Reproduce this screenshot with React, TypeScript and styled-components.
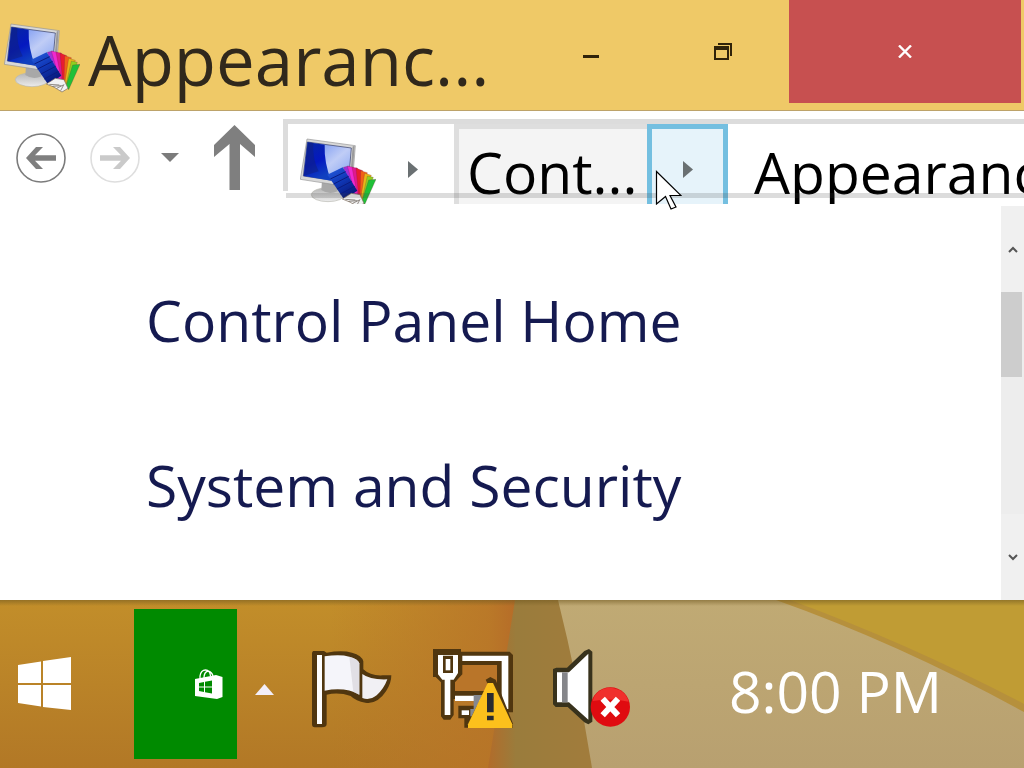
import React from "react";
import styled, { createGlobalStyle } from "styled-components";

const Global = createGlobalStyle`
  * { box-sizing: border-box; }
  body { margin: 0; font-family: "Open Sans", "Noto Sans", sans-serif; background: #fff; }
  button { border: 0; padding: 0; margin: 0; background: transparent; font: inherit; color: inherit; }
  svg { display: block; }
`;

const Desktop = styled.div`
  position: relative;
  display: flex;
  flex-direction: column;
  min-height: 100vh;
  overflow: hidden;
`;

const TitleBar = styled.header`
  display: flex;
  height: 111px;
  padding: 0 3px 0 4px;
  background: #efc967;
  border-bottom: 1px solid #bda36a;
`;

const TitleIcon = styled.div`
  padding-top: 23px;
  flex: none;
`;

const Title = styled.h1`
  flex: 1;
  min-width: 0;
  margin: 0;
  padding-left: 8px;
  overflow: hidden;
  white-space: nowrap;
  font-size: 69px;
  font-weight: 400;
  line-height: 118px;
  height: 110px;
  color: #30281c;
`;

const CaptionButton = styled.button<{ $close?: boolean }>`
  flex: none;
  display: grid;
  place-items: center;
  width: ${(p) => (p.$close ? 232 : 132)}px;
  height: 103px;
  background: ${(p) => (p.$close ? "#c75050" : "transparent")};
`;

const NavBar = styled.div`
  display: flex;
  align-items: center;
  height: 93px;
  padding-left: 16px;
`;

const NavButton = styled.button<{ $width: number; $after?: number }>`
  flex: none;
  display: grid;
  place-items: center;
  width: ${(p) => p.$width}px;
  height: 70px;
  margin-right: ${(p) => p.$after ?? 0}px;
`;

const AddressBar = styled.nav`
  position: relative;
  flex: 1;
  min-width: 0;
  display: flex;
  align-self: stretch;
  margin-top: 8px;
  padding-left: 5px;
  overflow: hidden;
  border-top: 5px solid #dcdcdc;
  background: linear-gradient(#dcdcdc, #dcdcdc) 0 0 / 5px 67px no-repeat;

  &::after {
    content: "";
    position: absolute;
    left: 3px;
    right: 0;
    top: 69px;
    height: 5px;
    background: rgba(60, 60, 60, 0.18);
    pointer-events: none;
  }
`;

const RootCrumb = styled.button`
  flex: none;
  display: flex;
  align-items: flex-start;
  gap: 32px;
  width: 166px;
  padding: 14px 0 0 12px;
`;

const CrumbArrow = styled.span`
  display: block;
  padding-top: 23px;
`;

const Crumb = styled.button<{ $plain?: boolean }>`
  flex: none;
  display: flex;
  align-items: flex-start;
  width: ${(p) => (p.$plain ? "auto" : "193px")};
  padding: ${(p) => (p.$plain ? "18px 0 0 26px" : "13px 0 0 8px")};
  text-align: left;
  white-space: nowrap;
  font-size: 57px;
  line-height: 60px;
  color: #000;
  border: solid #dedede;
  border-width: ${(p) => (p.$plain ? "0" : "5px 0 0 5px")};
  background: ${(p) => (p.$plain ? "transparent" : "#f4f4f4")};
`;

const HotArrow = styled.button`
  flex: none;
  display: flex;
  justify-content: center;
  align-items: flex-start;
  width: 81px;
  padding-top: 32px;
  border: 5px solid #74bfe0;
  border-bottom: 0;
  background: #e6f3fa;
`;

const Body = styled.main`
  flex: 1;
  display: flex;
  padding-top: 2px;
`;

const Links = styled.ul`
  flex: 1;
  display: flex;
  flex-direction: column;
  gap: 85px;
  margin: 0;
  padding: 74px 0 0 146px;
  list-style: none;
`;

const LinkItem = styled.li`
  font-size: 57px;
  line-height: 80px;
  a { color: #151a50; text-decoration: none; white-space: nowrap; }
`;

const ScrollBar = styled.div`
  display: flex;
  flex-direction: column;
  width: 23px;
  background: #f0f0f0;
`;

const ScrollButton = styled.button`
  display: grid;
  place-items: center;
  height: 86px;
`;

const ScrollTrack = styled.div`
  flex: 1;
  background: #ededed;
`;

const ScrollThumb = styled.div`
  width: 21px;
  height: 85px;
  background: #cdcdcd;
`;

const TaskBar = styled.footer`
  position: relative;
  display: flex;
  align-items: center;
  height: 168px;
  overflow: hidden;
  background: #bb852a;
`;

const Wallpaper = styled.svg`
  position: absolute;
  inset: 0;
  width: 100%;
  height: 100%;
`;

const TaskButton = styled.button<{ $width: number }>`
  position: relative;
  flex: none;
  display: grid;
  place-items: center;
  width: ${(p) => p.$width}px;
  height: 150px;
`;

const StoreTile = styled(TaskButton)`
  justify-items: end;
  padding-right: 14px;
  background: #008a00;
`;

const StartButton = styled(TaskButton)`
  justify-items: start;
  padding-left: 18px;
`;

const Tray = styled.div`
  position: relative;
  flex: 1;
  display: flex;
  align-items: center;
  padding-top: 10px;
`;

const TrayButton = styled(TaskButton)`
  height: 90px;
`;

const Clock = styled.time`
  margin-left: auto;
  padding: 4px 82px 0 0;
  font-size: 57px;
  line-height: 80px;
  white-space: nowrap;
  color: #fff;
`;

const Pointer = styled.svg`
  position: absolute;
  left: 655px;
  top: 170px;
`;

const cards = [
  ["130,88 146,84 176,165 160,172", "#a030d8"],
  ["142,84 160,88 180,168 166,168", "#f028d0"],
  ["156,88 172,90 184,170 172,170", "#e01890"],
  ["168,90 188,98 186,176 176,174", "#e81c30"],
  ["182,98 202,104 189,180 180,176", "#f06018"],
  ["194,106 214,112 190,188 182,182", "#e8b818"],
  ["202,114 220,118 193,192 186,186", "#90d020"],
  ["206,126 228,124 194,200 186,188", "#20c038"],
];

const DisplayIcon = ({ id }: { id: string }) => (
  <svg width="76" height="70" viewBox="0 0 228 210" aria-hidden="true">
    <defs>
      <linearGradient id={`${id}s`} x1="0" y1="0" x2="1" y2="1">
        <stop offset="0" stopColor="#5a80f0" />
        <stop offset="0.55" stopColor="#c0cdf6" />
        <stop offset="1" stopColor="#7c9cf0" />
      </linearGradient>
      <linearGradient id={`${id}d`} x1="0" y1="0" x2="0.4" y2="1">
        <stop offset="0" stopColor="#0828a0" />
        <stop offset="0.6" stopColor="#0418c0" />
        <stop offset="1" stopColor="#1040c0" />
      </linearGradient>
      <linearGradient id={`${id}b`} x1="0" y1="0" x2="0" y2="1">
        <stop offset="0" stopColor="#b4b4b4" />
        <stop offset="1" stopColor="#ececec" />
      </linearGradient>
      <linearGradient id={`${id}f`} x1="0" y1="0" x2="0.6" y2="1">
        <stop offset="0" stopColor="#2860e0" />
        <stop offset="0.5" stopColor="#1038b8" />
        <stop offset="1" stopColor="#081878" />
      </linearGradient>
    </defs>
    <ellipse cx="84" cy="170" rx="50" ry="21" fill={`url(#${id}b)`} stroke="#b8b8b0" strokeWidth="2" />
    <path d="M66 128 L110 136 L112 160 Q88 172 64 156 Z" fill="#a8a8a8" />
    <path d="M21 3 L166 23 L156 148 L1 124 Z" fill="#d8d8d8" stroke="#969696" strokeWidth="2" />
    <path d="M164 24 L158 25 L148 146 L155 148 Z" fill="#9a9a9a" />
    <path d="M22 12 L154 30 L145 134 L10 114 Z" fill={`url(#${id}s)`} stroke="#303860" strokeWidth="2" />
    <path d="M23 13 L74 20 Q72 76 94 128 L11 114 Z" fill={`url(#${id}d)`} />
    <path d="M23 13 L40 15 Q36 60 56 100 L11 114 Z" fill="#102080" opacity="0.55" />
    {cards.map(([points, fill]) => (
      <polygon key={points} points={points} fill={fill} stroke="#702030" strokeOpacity="0.45" strokeWidth="1.5" />
    ))}
    <path d="M82 110 L128 88 L172 158 L132 184 Z" fill={`url(#${id}f)`} />
    <path d="M91 123 L137 101 M101 138 L146 115 M111 153 L155 130 M121 168 L164 145" stroke="#0a1c80" strokeWidth="3" />
    <path d="M127 183 L154 166 L180 170 L192 196 L174 207 Q150 190 127 183 Z" fill="#f2f2f2" stroke="#786858" strokeWidth="2" />
    <path d="M136 184 L166 186 M146 190 L172 188 M158 196 L178 186 M170 203 L180 184" stroke="#605850" strokeWidth="2" />
  </svg>
);

const RightTriangle = () => (
  <svg width="10" height="17" viewBox="0 0 10 17" aria-hidden="true">
    <path d="M0 0 L10 8.5 L0 17 Z" fill="#6a7072" />
  </svg>
);

const FlagIcon = () => (
  <svg width="80" height="78" viewBox="0 0 240 234" aria-hidden="true">
    <path d="M3 3 H36 L44 8 Q90 0 120 8 Q150 16 154 34 V58 Q175 78 212 76 L238 76 Q238 100 222 124 Q196 164 160 158 Q132 154 116 138 Q80 126 44 134 V222 Q44 232 30 232 H8 Q0 232 0 222 V8 Z" fill="#50360f" />
    <path d="M15 15 H30 V222 H15 Z" fill="#fff" />
    <path d="M38 19 Q84 12 112 20 Q138 26 142 40 V134 Q100 110 38 122 Z" fill="#f5f5fa" />
    <path d="M151 72 Q174 90 226 88 Q216 116 194 136 Q174 152 151 144 Z" fill="#f1f0f4" />
    <path d="M112 20 Q138 26 142 40 V134 L124 126 Z" fill="#d9d6dc" opacity="0.7" />
  </svg>
);

const NetworkIcon = () => (
  <svg width="80" height="80" viewBox="0 0 240 240" aria-hidden="true">
    <path d="M0 0 H84 V8 H230 L240 18 V190 H190 V150 H62 V198 L52 212 H32 L24 202 V100 L8 84 H0 Z" fill="#50360f" />
    <path d="M88 48 H192 V126 H66 V100 L88 76 Z" fill="#b97529" />
    <path d="M15 18 H75 V72 L62 92 H52 V198 H35 V92 H28 L15 76 Z M30 20 V72 H60 V20 Z" fillRule="evenodd" fill="#fff" />
    <path d="M38 30 H52 V64 H38 Z" fill="#fff" />
    <path d="M88 20 H226 V180 H206 V36 H88 Z M66 140 H142 V156 H66 Z" fill="#fff" />
    <path d="M76 170 H144 V236 H94 V208 H76 Z" fill="#50360f" />
    <path d="M86 184 H108 V198 H86 Z" fill="#fff" />
    <path d="M122 138 H148 L116 202 H112 V180 H122 Z" fill="#858890" />
    <path d="M158 92 L172 84 L188 92 L240 224 V237 H226 Z" fill="#50360f" />
    <path d="M164 102 H180 L238 226 V237 H105 V226 Z" fill="#fcc01c" />
    <path d="M162 132 H182 V190 H162 Z M162 200 H182 V214 H162 Z" fill="#292a30" />
  </svg>
);

const SpeakerIcon = () => (
  <svg width="78" height="80" viewBox="0 0 234 240" aria-hidden="true">
    <path d="M0 60 L10 56 H42 L94 6 L108 0 L118 8 V218 L106 226 L94 220 L44 174 H8 L0 166 Z" fill="#38321c" />
    <path d="M12 70 H48 L106 14 V212 L48 160 H12 Z" fill="#fff" />
    <path d="M27 70 H44 V160 H27 Z" fill="#85868a" />
    <circle cx="172" cy="174" r="59" fill="#e00b10" />
    <path d="M119 156 Q129 118 172 116 Q217 120 227 158 Q173 146 119 156 Z" fill="#f0302c" />
    <path d="M149 149 L195 199 M195 149 L149 199" stroke="#fff" strokeWidth="18" />
  </svg>
);

export default function App() {
  return (
    <Desktop>
      <Global />
      <TitleBar>
        <TitleIcon><DisplayIcon id="title" /></TitleIcon>
        <Title>Appearanc...</Title>
        <CaptionButton aria-label="Minimize">
          <svg width="16" height="13" viewBox="0 0 16 13"><path d="M0 10 H16 V13 H0 Z" fill="#30230a" /></svg>
        </CaptionButton>
        <CaptionButton aria-label="Restore">
          <svg width="18" height="18" viewBox="0 0 18 18">
            <path d="M4 1 H17 V13 M1 5 H14 V16 H1 Z" fill="none" stroke="#30230a" strokeWidth="2" />
            <path d="M0 3 H15 V7 H0 Z" fill="#30230a" />
          </svg>
        </CaptionButton>
        <CaptionButton $close aria-label="Close">
          <svg width="15" height="13" viewBox="0 0 15 13"><path d="M1 0.5 L13 12.5 M13 0.5 L1 12.5" stroke="#fff" strokeWidth="2.4" /></svg>
        </CaptionButton>
      </TitleBar>

      <NavBar>
        <NavButton $width={50} $after={24} aria-label="Back">
          <svg width="50" height="50" viewBox="0 0 50 50">
            <circle cx="25" cy="25" r="24" fill="none" stroke="#7b7b7b" strokeWidth="1.6" />
            <path d="M10 25 L20 14 H27 L19 22.3 H40 V27.7 H19 L27 36 H20 Z" fill="#7f7f7f" />
          </svg>
        </NavButton>
        <NavButton $width={50} aria-label="Forward">
          <svg width="50" height="50" viewBox="0 0 50 50">
            <circle cx="25" cy="25" r="24" fill="none" stroke="#dedede" strokeWidth="1.6" />
            <path d="M40 25 L30 14 H23 L31 22.3 H10 V27.7 H31 L23 36 H30 Z" fill="#cacaca" />
          </svg>
        </NavButton>
        <NavButton $width={60} aria-label="Recent locations">
          <svg width="18" height="9" viewBox="0 0 18 9"><path d="M0 0 H18 L9 9 Z" fill="#7c7c7c" /></svg>
        </NavButton>
        <NavButton $width={68} $after={15} aria-label="Up">
          <svg width="41" height="65" viewBox="0 0 41 65">
            <path d="M20.5 0 L41 20 V32 L26 19 V65 H15.500 V19 L0 32 V20 Z" fill="#7f7f7f" />
          </svg>
        </NavButton>
        <AddressBar aria-label="Address">
          <RootCrumb aria-label="Control Panel root">
            <DisplayIcon id="crumb" />
            <CrumbArrow><RightTriangle /></CrumbArrow>
          </RootCrumb>
          <Crumb>Cont...</Crumb>
          <HotArrow aria-label="Show subfolders"><RightTriangle /></HotArrow>
          <Crumb $plain>Appearance</Crumb>
        </AddressBar>
      </NavBar>

      <Body>
        <Links>
          <LinkItem><a href="#home">Control Panel Home</a></LinkItem>
          <LinkItem><a href="#security">System and Security</a></LinkItem>
        </Links>
        <ScrollBar>
          <ScrollButton aria-label="Scroll up">
            <svg width="10" height="7" viewBox="0 0 10 7"><path d="M1 6 L5 2 L9 6" fill="none" stroke="#555" strokeWidth="2" /></svg>
          </ScrollButton>
          <ScrollTrack><ScrollThumb /></ScrollTrack>
          <ScrollButton aria-label="Scroll down">
            <svg width="10" height="7" viewBox="0 0 10 7"><path d="M1 1 L5 5 L9 1" fill="none" stroke="#555" strokeWidth="2" /></svg>
          </ScrollButton>
        </ScrollBar>
      </Body>

      <TaskBar>
        <Wallpaper viewBox="0 0 1024 168" preserveAspectRatio="none" aria-hidden="true">
          <defs>
            <linearGradient id="amber" x1="0" y1="0" x2="0" y2="1">
              <stop offset="0" stopColor="#c28e2a" /><stop offset="1" stopColor="#b27826" />
            </linearGradient>
            <linearGradient id="rust" x1="0" y1="0" x2="1" y2="0">
              <stop offset="0" stopColor="#b87628" stopOpacity="0" />
              <stop offset="0.85" stopColor="#b87428" stopOpacity="0.8" />
              <stop offset="1" stopColor="#b66c28" />
            </linearGradient>
            <linearGradient id="olive" x1="0" y1="0" x2="1" y2="0">
              <stop offset="0" stopColor="#b26c2a" /><stop offset="0.25" stopColor="#9a7c3c" /><stop offset="1" stopColor="#a27c3c" />
            </linearGradient>
            <linearGradient id="tan" x1="0" y1="0" x2="0" y2="1">
              <stop offset="0" stopColor="#c0aa74" /><stop offset="1" stopColor="#b8a070" />
            </linearGradient>
            <linearGradient id="edge" x1="0" y1="1" x2="0.12" y2="0.6">
              <stop offset="0" stopColor="#b48a3a" /><stop offset="1" stopColor="#c09c34" />
            </linearGradient>
            <linearGradient id="shade" x1="0" y1="0" x2="0" y2="1">
              <stop offset="0" stopColor="#705820" stopOpacity="0.55" /><stop offset="1" stopColor="#705820" stopOpacity="0" />
            </linearGradient>
          </defs>
          <rect width="1024" height="168" fill="url(#amber)" />
          <rect x="330" width="186" height="168" fill="url(#rust)" />
          <path d="M515 0 H570 L600 168 H488 Z" fill="url(#olive)" />
          <path d="M558 0 H1024 V168 H592 Q578 80 558 0 Z" fill="url(#tan)" />
          <path d="M776 0 Q900 44 1024 112 V0 Z" fill="#b6903c" />
          <path d="M790 0 Q910 44 1024 104 V0 Z" fill="#c09c34" />
          <rect width="1024" height="6" fill="url(#shade)" />
        </Wallpaper>
        <StartButton $width={134} aria-label="Start">
          <svg width="54" height="54" viewBox="0 0 54 54">
            <path d="M0 8 L23 4.500 V26 H0 Z M25 4 L53 0 V26 H25 Z M0 28 H23 V49.500 L0 46 Z M25 28 H53 V53 L25 50 Z" fill="#fff" />
          </svg>
        </StartButton>
        <StoreTile $width={103} aria-label="Store">
          <svg width="28" height="30" viewBox="0 0 28 30">
            <path d="M5 10 V7 Q6 1 10.500 1 Q15 1 15.500 7 M9 9 Q9 3 13 2 Q17 3 18 7" fill="none" stroke="#fff" strokeWidth="1.3" />
            <path d="M0 10 L21 6 L27.500 8 V28 L22 30 L0 27 Z" fill="#fff" />
            <path d="M4 14 L9 13 V17.500 H4 Z M10 12.800 L17 11.500 V17.500 H10 Z M4 18.500 H9 V23 L4 22 Z M10 18.500 H17 V24.500 L10 23.200 Z" fill="#008a00" />
          </svg>
        </StoreTile>
        <Tray>
          <TrayButton $width={54} aria-label="Show hidden icons">
            <svg width="19" height="11" viewBox="0 0 19 11"><path d="M9.500 0 L19 11 H0 Z" fill="#f2eef8" /></svg>
          </TrayButton>
          <TrayButton $width={122} aria-label="Action Center"><FlagIcon /></TrayButton>
          <TrayButton $width={120} aria-label="Network"><NetworkIcon /></TrayButton>
          <TrayButton $width={118} aria-label="Volume muted"><SpeakerIcon /></TrayButton>
          <Clock>8:00 PM</Clock>
        </Tray>
      </TaskBar>

      <Pointer width="27" height="40" viewBox="0 0 27 40" aria-hidden="true">
        <path d="M1.500 1.500 L26 25.500 H15 L21 37 L16 39 L10.500 26.500 L1.500 34 Z" fill="#fff" stroke="#000" strokeWidth="1.200" />
      </Pointer>
    </Desktop>
  );
}
